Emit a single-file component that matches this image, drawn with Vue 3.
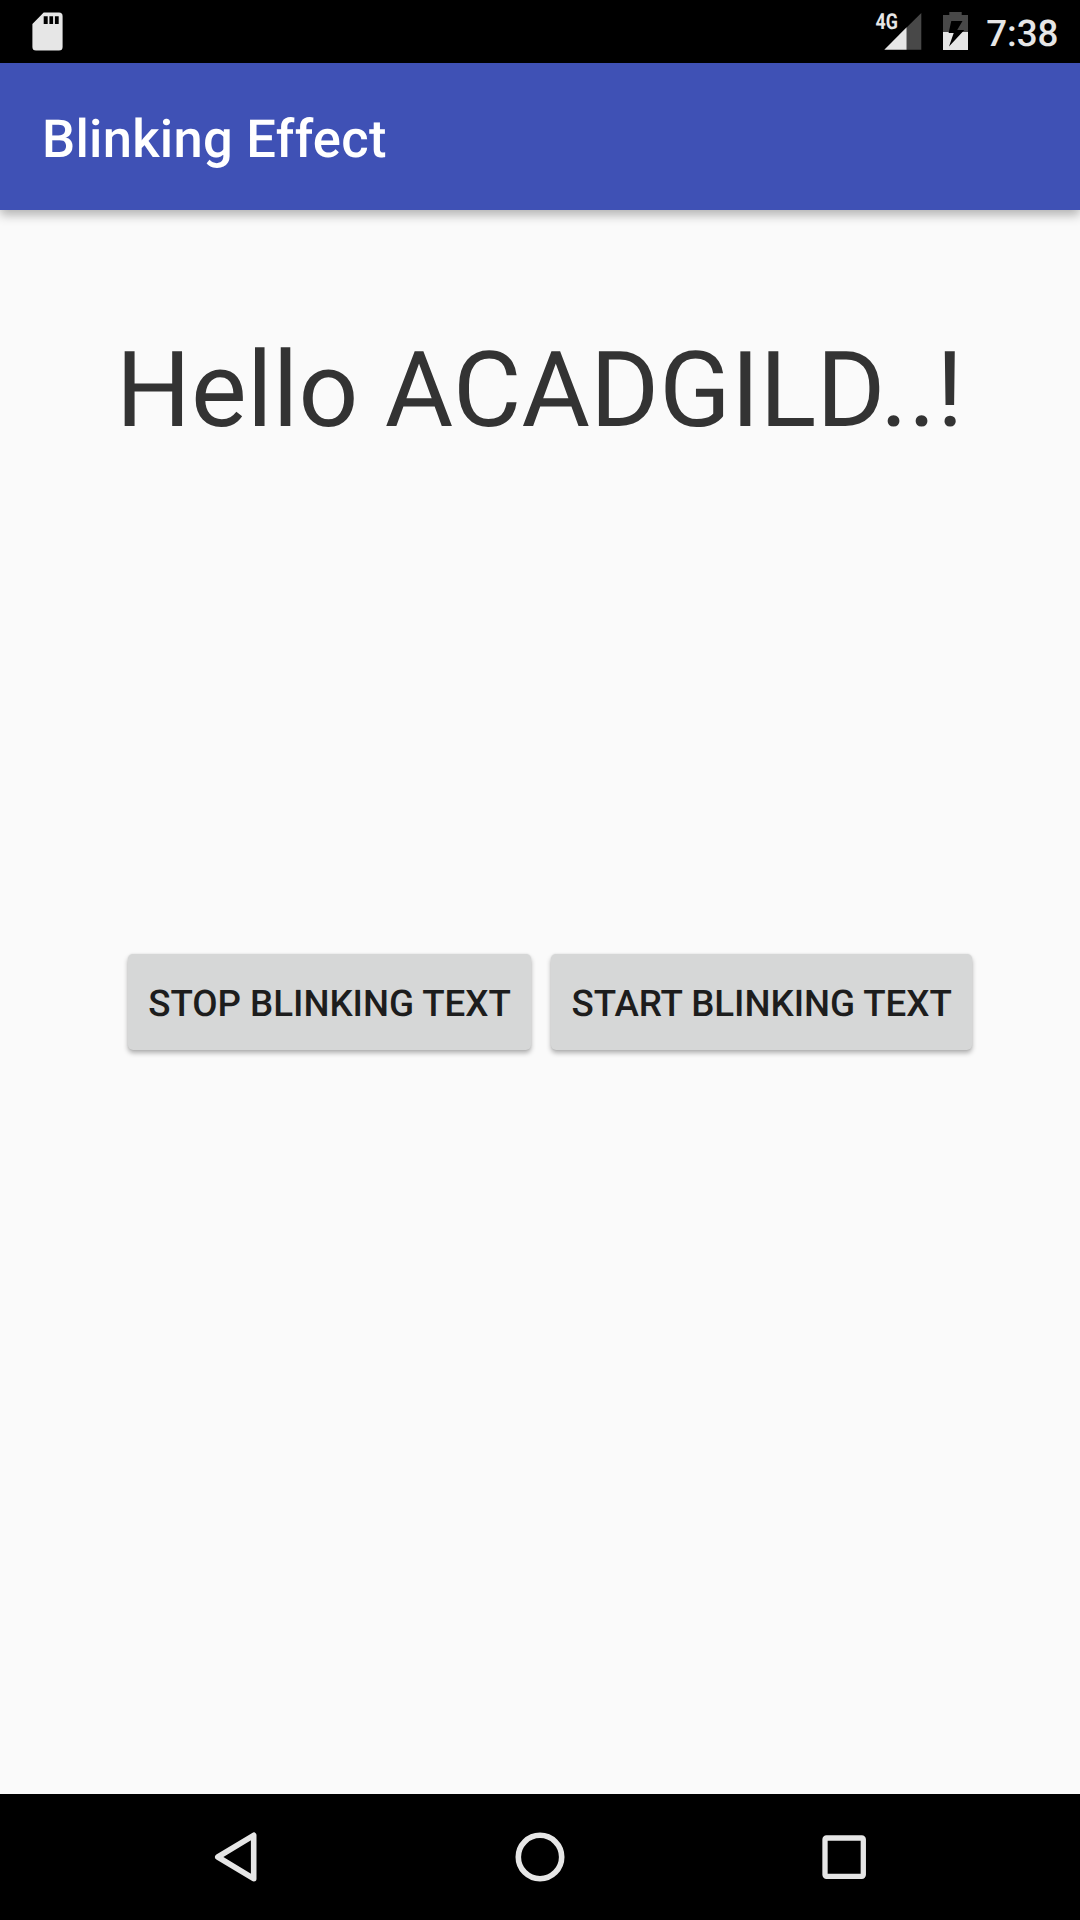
<script setup>
const actions = ['Stop Blinking Text', 'Start Blinking Text']
</script>

<template>
  <div class="screen">
    <header class="status">
      <svg class="sd" width="32" height="40" viewBox="0 0 32 40">
        <path fill="#e6e6e6" fill-rule="evenodd" d="M11.7 .6H27A3.6 3.6 0 0 1 30.6 4.2V35A3.6 3.6 0 0 1 27 38.6H4A3.6 3.6 0 0 1 .4 35V12ZM11.7 4.3V12.1H15.7V4.3ZM17.4 4.3V12.1H21.1V4.3ZM22.9 4.3V12.1H26.7V4.3Z" />
      </svg>
      <svg class="signal" width="47" height="50" viewBox="0 -10 47 50">
        <text x="0.6" y="17.2" textLength="22.4" lengthAdjust="spacingAndGlyphs">4G</text>
        <path fill="#484848" d="M46.3 1V37.8H31.6V15.4Z" />
        <path fill="#e6e6e6" d="M31.6 15.3V37.8H9.3Z" />
      </svg>
      <svg class="battery" width="25" height="38" viewBox="0 0 25 38">
        <path fill="#484848" d="M6.3 0H18.7V3H25V20H0V3H6.3Z" />
        <path fill="#e6e6e6" d="M0 20H25V38H0Z" />
        <path fill="#000" d="M8.3 8.9H19.5L14.2 18H21.3L6 34.5L10.7 21H5.6Z" />
      </svg>
      <span class="clock">7:38</span>
    </header>
    <div class="appbar">Blinking Effect</div>
    <main class="content">
      <h1 class="hello">Hello ACADGILD..!</h1>
      <div class="actions">
        <button v-for="label in actions" :key="label" class="btn">{{ label }}</button>
      </div>
    </main>
    <nav class="nav">
      <svg width="50" height="50" viewBox="0 0 50 50">
        <path d="M6.8 25L42.7 3.3V46.7Z" />
      </svg>
      <svg width="50" height="50" viewBox="0 0 50 50">
        <circle cx="25" cy="25" r="21.7" />
      </svg>
      <svg width="50" height="50" viewBox="0 0 50 50">
        <rect x="6" y="6" width="38.3" height="38.3" rx="1.5" stroke-width="5.3" />
      </svg>
    </nav>
  </div>
</template>

<style>
body {
  margin: 0;
}
</style>

<style scoped>
.screen {
  width: 1080px;
  height: 1920px;
  display: flex;
  flex-direction: column;
  overflow: hidden;
  background: #fafafa;
  font-family: Roboto, sans-serif;
  text-rendering: geometricPrecision;
}
.status {
  height: 63px;
  box-sizing: border-box;
  padding: 12px 21.5px 0 32px;
  display: flex;
  align-items: flex-start;
  background: #000;
}
.signal {
  margin-left: auto;
  margin-top: -10px;
}
.signal text {
  font: 700 22px Roboto, sans-serif;
  fill: #e6e6e6;
}
.battery {
  margin-left: 21.5px;
}
.clock {
  margin-left: 18px;
  color: #e6e6e6;
  font-size: 36.75px;
  font-weight: 500;
  line-height: 43px;
}
.appbar {
  height: 147px;
  flex: none;
  box-sizing: border-box;
  padding: 5px 0 0 42px;
  line-height: 142px;
  background: #3f51b5;
  color: #fff;
  font-size: 52.5px;
  font-weight: 500;
  letter-spacing: 0.27px;
  box-shadow: 0 5px 10px rgba(0, 0, 0, 0.29);
}
.content {
  flex: 1;
  display: flex;
  flex-direction: column;
}
.hello {
  margin: 119px 0 0 116px;
  font-size: 105px;
  line-height: 123px;
  font-weight: 400;
  letter-spacing: 0.2px;
  color: #333;
  white-space: nowrap;
}
.actions {
  margin: 502px 0 0 127.5px;
  display: flex;
  gap: 20px;
}
.btn {
  height: 96px;
  box-sizing: border-box;
  border: 0;
  border-radius: 5px;
  padding: 3px 20px 0 20.8px;
  background: #d6d7d7;
  color: #1d1d1d;
  font: 500 36.75px Roboto, sans-serif;
  letter-spacing: -0.05px;
  text-transform: uppercase;
  white-space: nowrap;
  text-rendering: geometricPrecision;
  box-shadow: 0 3px 5px rgba(0, 0, 0, 0.3), 0 0 2px rgba(0, 0, 0, 0.1);
}
.nav {
  height: 126px;
  flex: none;
  display: flex;
  align-items: center;
  justify-content: center;
  gap: 254px;
  background: #000;
}
.nav svg {
  fill: none;
  stroke: #e6e6e6;
  stroke-width: 5.6;
  stroke-linejoin: round;
}
</style>
